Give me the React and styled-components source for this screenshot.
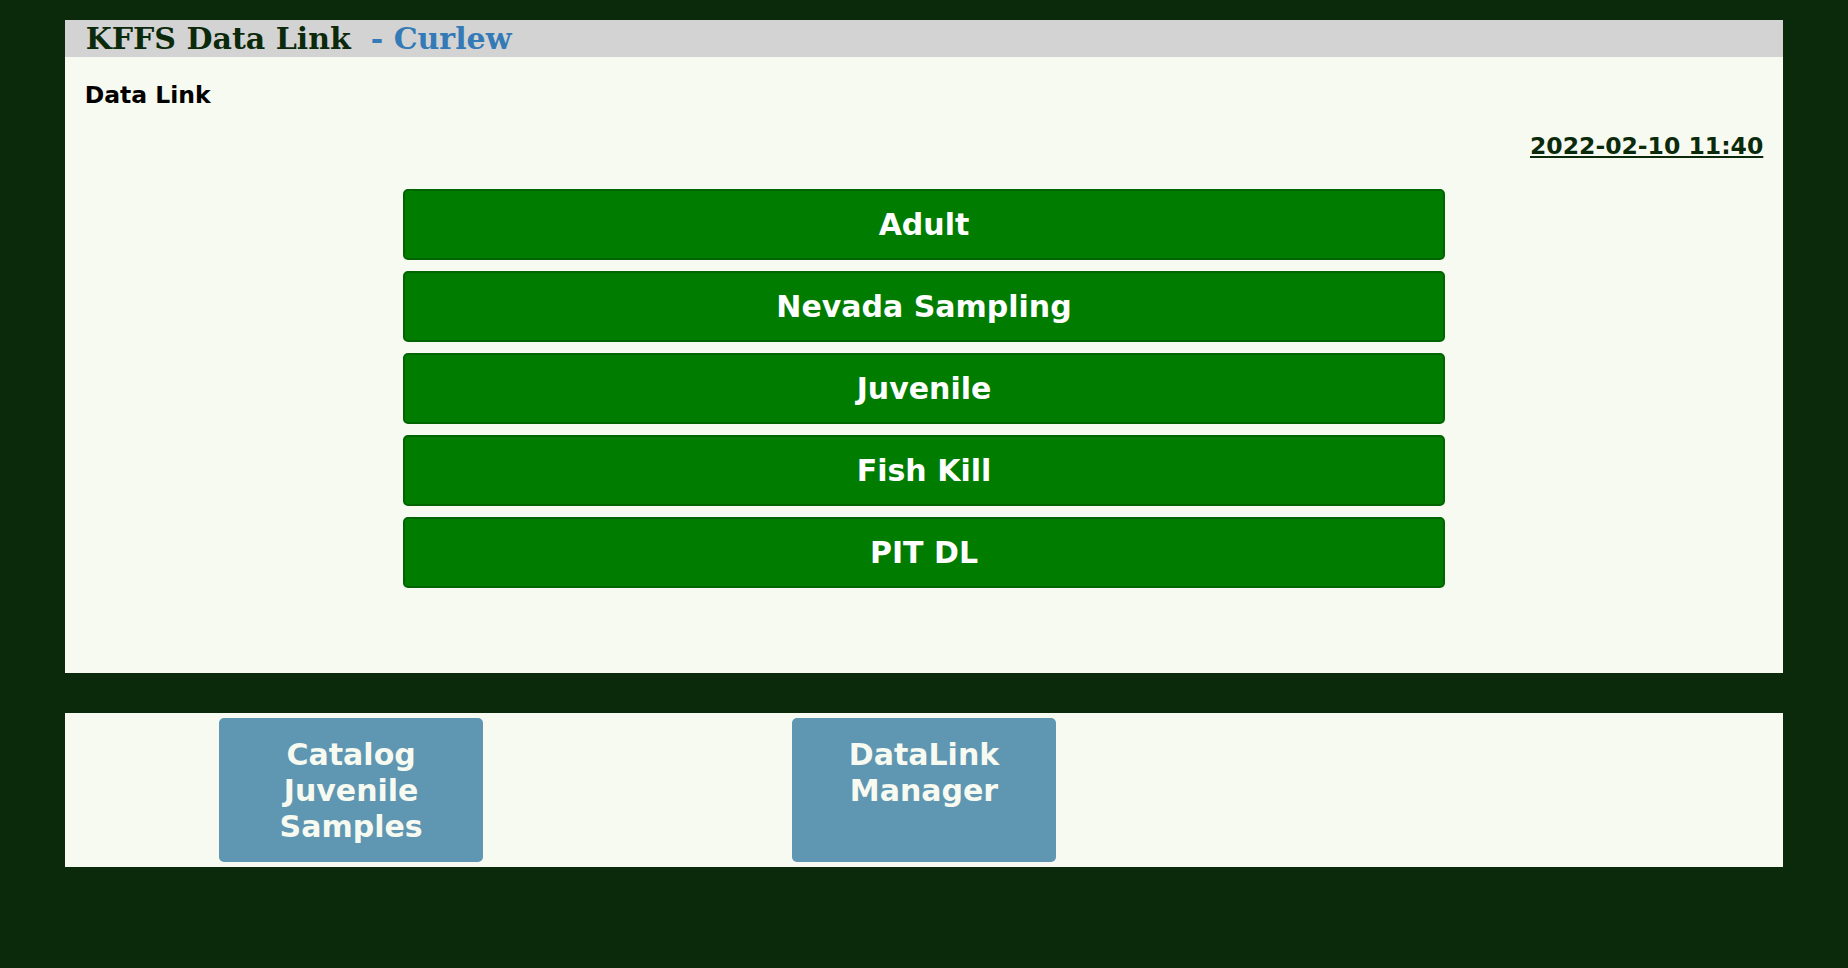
import React from "react";
import styled, { createGlobalStyle } from "styled-components";

const Global = createGlobalStyle`
  html, body {
    margin: 0;
    padding: 0;
    background: #0b2a0b;
    min-height: 100%;
  }
  body {
    font-family: "DejaVu Sans", "Liberation Sans", sans-serif;
  }
`;

const Page = styled.div`
  width: 93%;
  margin: 0 auto;
  padding-top: 20px;
  display: flex;
  flex-direction: column;
`;

const Header = styled.header`
  background: #d3d3d3;
  height: 37px;
  line-height: 37px;
  padding: 0 21px;
  font-family: "DejaVu Serif", "Liberation Serif", serif;
  font-weight: bold;
  font-size: 30px;
  color: #0b2a0b;
  white-space: nowrap;
`;

const Station = styled.span`
  color: #337ab7;
  margin-left: 20px;
`;

const Panel = styled.main`
  background: #f7faf0;
  padding: 23.5px 20px 85px;
  display: flex;
  flex-direction: column;
`;

const SubTitle = styled.div`
  font-weight: bold;
  font-size: 23.5px;
  color: #000;
`;

const DateLink = styled.a`
  align-self: flex-end;
  margin-top: 23.6px;
  font-weight: bold;
  font-size: 23.5px;
  color: #0b2a0b;
  text-decoration: underline;
  text-underline-offset: 2px;
`;

const ButtonList = styled.nav`
  margin-top: 29px;
  display: flex;
  flex-direction: column;
  align-items: center;
  gap: 11px;
`;

const GreenButton = styled.button`
  width: 1042px;
  height: 71px;
  box-sizing: border-box;
  background: #007d00;
  border: 2px solid #006400;
  border-radius: 5px;
  color: #ffffff;
  font-family: "DejaVu Sans", "Liberation Sans", sans-serif;
  font-weight: bold;
  font-size: 30px;
  cursor: pointer;
`;

const Gap = styled.div`
  height: 40px;
`;

const Tools = styled.section`
  background: #f7faf0;
  padding: 5px 0;
  display: grid;
  grid-template-columns: repeat(3, 1fr);
`;

const ToolCell = styled.div`
  display: flex;
  justify-content: center;
`;

const BlueButton = styled.button`
  width: 46%;
  box-sizing: border-box;
  background: #5f96b2;
  border: none;
  border-radius: 5px;
  padding: 19px 10px 17px;
  color: #f7faf0;
  font-family: "DejaVu Sans", "Liberation Sans", sans-serif;
  font-weight: bold;
  font-size: 30px;
  line-height: 36px;
  text-align: center;
  display: flex;
  align-items: flex-start;
  justify-content: center;
  cursor: pointer;
`;

const forms = ["Adult", "Nevada Sampling", "Juvenile", "Fish Kill", "PIT DL"];

export default function App() {
  return (
    <>
      <Global />
      <Page>
        <Header>
          KFFS Data Link<Station>- Curlew</Station>
        </Header>
        <Panel>
          <SubTitle>Data Link</SubTitle>
          <DateLink href="#">2022-02-10 11:40</DateLink>
          <ButtonList>
            {forms.map((f) => (
              <GreenButton key={f}>{f}</GreenButton>
            ))}
          </ButtonList>
        </Panel>
        <Gap />
        <Tools>
          <ToolCell>
            <BlueButton>
              Catalog
              <br />
              Juvenile
              <br />
              Samples
            </BlueButton>
          </ToolCell>
          <ToolCell>
            <BlueButton>
              DataLink
              <br />
              Manager
            </BlueButton>
          </ToolCell>
          <ToolCell />
        </Tools>
      </Page>
    </>
  );
}
